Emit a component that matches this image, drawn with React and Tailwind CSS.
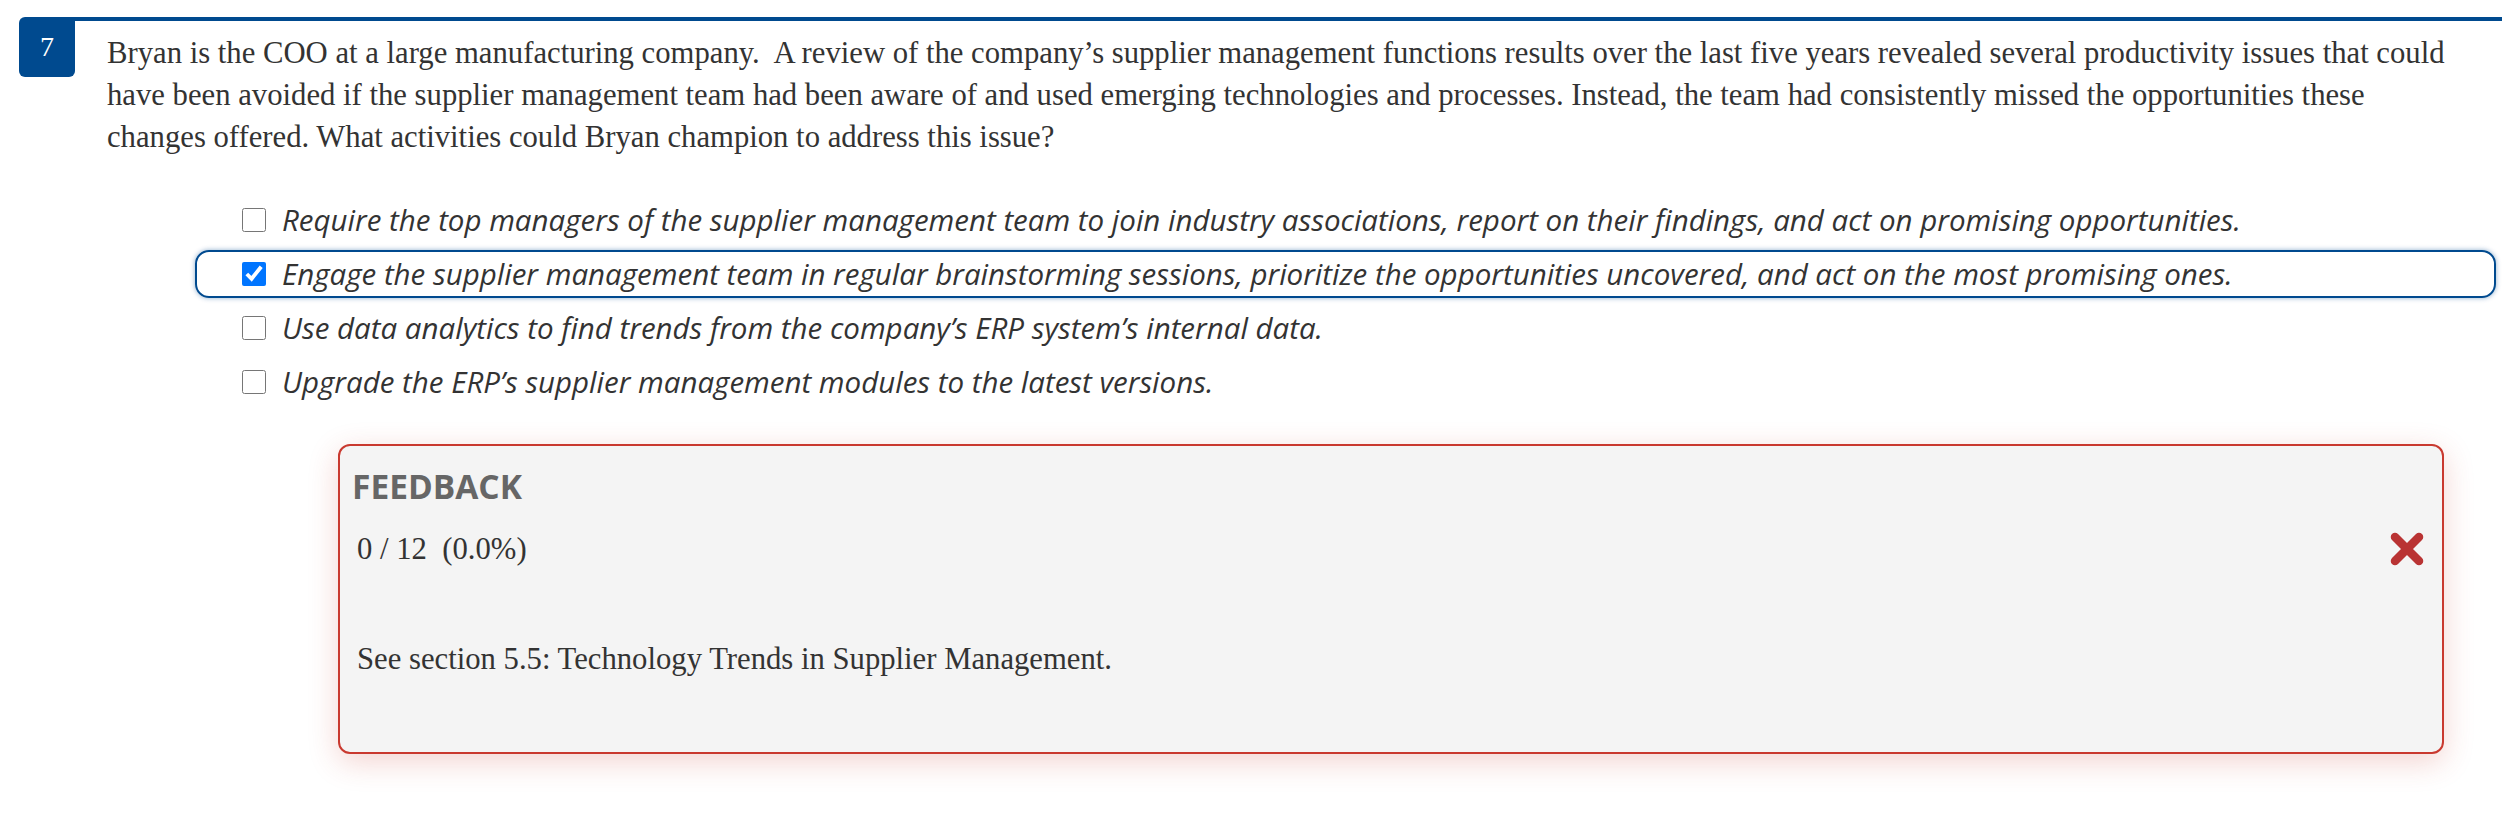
import React from 'react';

const serif = "font-['Liberation_Serif',serif]";
const sans = "font-['Open_Sans',sans-serif]";

const options = [
  { text: 'Require the top managers of the supplier management team to join industry associations, report on their findings, and act on promising opportunities.', checked: false },
  { text: 'Engage the supplier management team in regular brainstorming sessions, prioritize the opportunities uncovered, and act on the most promising ones.', checked: true },
  { text: 'Use data analytics to find trends from the company\u2019s ERP system\u2019s internal data.', checked: false },
  { text: 'Upgrade the ERP\u2019s supplier management modules to the latest versions.', checked: false },
];

function Option({ text, checked }) {
  return (
    <div className="h-[54px] flex items-center">
      <label
        className={
          'flex-1 h-[48px] flex items-center gap-4 pl-[45px] rounded-[14px] border-2 ' +
          (checked
            ? 'border-[#004a8f] shadow-[0_0_5px_rgba(0,74,143,0.45)]'
            : 'border-transparent')
        }
      >
        <input type="checkbox" checked={checked} readOnly className="w-6 h-6 m-0 shrink-0" />
        <span className={`${sans} italic text-[29.5px] text-[#333]`}>{text}</span>
      </label>
    </div>
  );
}

export default function App() {
  return (
    <div className="w-[2520px] h-[825px] bg-white pl-[19px] pr-[18px] pt-[17px]">
      <div className="flex">
        {/* question number */}
        <div className={`${serif} w-[56px] h-[60px] shrink-0 bg-[#004a8f] rounded-tl-[6px] rounded-b-[6px] flex items-center justify-center text-white text-[28px]`}>
          7
        </div>

        <div className="flex-1 border-t-4 border-[#004a8f] pl-[32px] pt-[11px]">
          <p className={`${serif} pr-[46px] text-[30.7px] leading-[42px] text-[#333]`}>
            Bryan is the COO at a large manufacturing company.&nbsp; A review of the company’s supplier management functions results over the last five years revealed several productivity issues that could have been avoided if the supplier management team had been aware of and used emerging technologies and processes. Instead, the team had consistently missed the opportunities these changes offered. What activities could Bryan champion to address this issue?
          </p>

          <div className="ml-[88px] mr-[6px] mt-[35px]">
            {options.map((o, i) => (
              <Option key={i} {...o} />
            ))}
          </div>

          {/* feedback */}
          <div className="ml-[231px] mr-[58px] mt-[35px] border-2 border-[#c9392f] rounded-[12px] bg-[#f4f4f4] pt-[18px] pb-[73px] pl-[12px] pr-[17px] shadow-[0_8px_30px_rgba(201,57,47,0.22)]">
            <div className={`${sans} font-bold text-[33.5px] leading-[45px] text-[#666]`}>FEEDBACK</div>
            <div className="mt-[20px] pl-[5px] flex items-center justify-between">
              <span className={`${serif} text-[30.7px] leading-[40px] text-[#333] whitespace-pre`}>0 / 12  (0.0%)</span>
              <svg width="36" height="34" viewBox="0 0 36 34" className="text-[#b93333]">
                <path d="M6 5 L30 29 M30 5 L6 29" stroke="currentColor" strokeWidth="8.5" strokeLinecap="round" />
              </svg>
            </div>
            <p className={`${serif} mt-[70px] pl-[5px] text-[30.7px] leading-[40px] text-[#333]`}>
              See section 5.5: Technology Trends in Supplier Management.
            </p>
          </div>
        </div>
      </div>
    </div>
  );
}
